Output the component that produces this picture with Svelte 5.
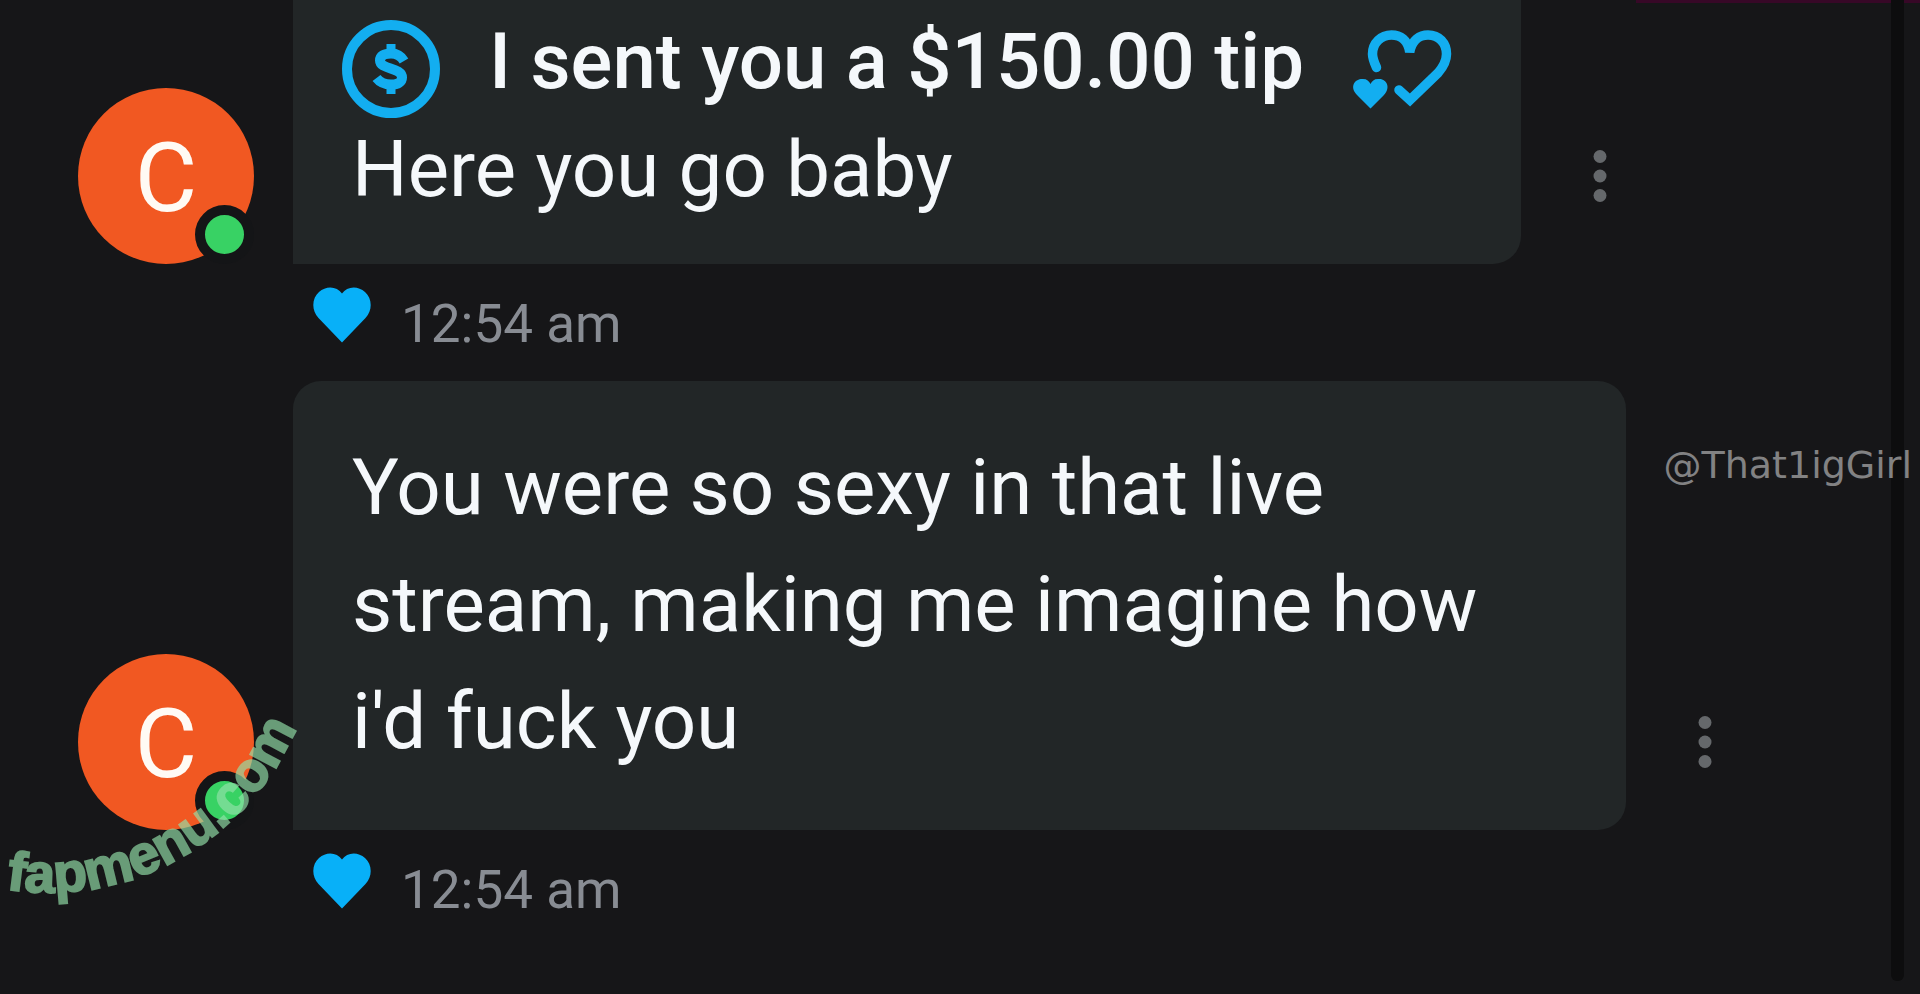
<script lang="ts">
  type Message = {
    id: number;
    initial: string;
    tip?: string;
    text: string;
    time: string;
  };

  const messages: Message[] = [
    { id: 1, initial: 'C', tip: 'I sent you a $150.00 tip', text: 'Here you go baby', time: '12:54 am' },
    {
      id: 2,
      initial: 'C',
      text: "You were so sexy in that live stream, making me imagine how i'd fuck you",
      time: '12:54 am',
    },
  ];
</script>

<main class="chat">
  {#each messages as message (message.id)}
    <article class="message" class:with-tip={message.tip}>
      <div class="row">
        <div class="avatar">
          <span>{message.initial}</span>
          <i class="online"></i>
        </div>

        <div class="bubble">
          {#if message.tip}
            <div class="tip">
              <svg class="tip-icon" viewBox="0 0 98 98" fill="none" aria-hidden="true">
                <circle cx="49" cy="49" r="44" stroke="currentColor" stroke-width="10" />
                <path
                  d="M62 41C59 36 55 33.500 49 33.500C42 33.500 38 36 38 40.500C38 50 60 47 60 57.500C60 62 56 64.500 49 64.500C42 64.500 38 62.500 34.500 58"
                  stroke="currentColor"
                  stroke-width="10"
                />
                <path d="M49 24V34M49 64V74" stroke="currentColor" stroke-width="9" />
              </svg>
              <strong>{message.tip}</strong>
              <svg class="tip-icon" viewBox="0 0 98 98" fill="none" aria-hidden="true">
                <path
                  d="M23.500 47.500C21 42 19.500 38 19.500 34C19.500 23 28 15 38.500 15C47 15 55 20 56.700 32C59 20 67 15 75 15C86 15 93.500 23 93.500 34C93.500 41 91 46 85 53L57 80L46 70"
                  stroke="currentColor"
                  stroke-width="9.5"
                  stroke-linecap="round"
                />
                <path
                  d="M17.500 88.500L4 75C-5 65 4 58 10 59C14 59 16 61 17.500 64C19 61 21 59 25 59C32 58 39 66 31 75Z"
                  fill="currentColor"
                />
              </svg>
            </div>
          {/if}
          <p>{message.text}</p>
        </div>

        <button class="more" type="button" aria-label="More">
          <svg viewBox="0 0 14 52" fill="currentColor" aria-hidden="true">
            <circle cx="7" cy="6.500" r="6.500" />
            <circle cx="7" cy="26" r="6.500" />
            <circle cx="7" cy="45.500" r="6.500" />
          </svg>
        </button>
      </div>

      <div class="meta">
        <button class="like" type="button" aria-label="Like">
          <svg viewBox="0 0 58 56" fill="currentColor" aria-hidden="true">
            <path d="M29 55.500L5.500 31C-2 23 -1 11 6 5C13 -1.500 24 -1 29 6.500C34 -1 45 -1.500 52 5C59 11 60 23 52.500 31Z" />
          </svg>
        </button>
        <time>{message.time}</time>
      </div>
    </article>
  {/each}

  <div class="top-line"></div>
  <div class="scrollbar"></div>
  <span class="handle">@That1igGirl</span>

  <svg class="stamp" viewBox="0 0 320 300" aria-label="fapmenu.com">
    <path id="stamp-arc" d="M6 249A269 269 0 0 0 314 25" fill="none" />
    <text><textPath href="#stamp-arc">fapmenu.com</textPath></text>
  </svg>
</main>

<style>
  :global(body) {
    margin: 0;
    background: #161618;
  }

  .chat {
    position: relative;
    min-height: 100vh;
    box-sizing: border-box;
    padding-left: 78px;
    overflow: hidden;
    font-family: Roboto, 'Liberation Sans', sans-serif;
    color: #f5f8fb;
  }

  .message {
    margin-bottom: 11px;
  }

  .row {
    display: flex;
    align-items: flex-end;
  }

  .avatar {
    position: relative;
    flex: none;
    display: flex;
    align-items: center;
    justify-content: center;
    box-sizing: border-box;
    width: 176px;
    height: 176px;
    margin-right: 39px;
    padding-top: 4px;
    border-radius: 50%;
    background: #f15822;
    font-size: 96px;
    color: #fffaf4;
  }

  .online {
    position: absolute;
    right: 0;
    bottom: 0;
    width: 39px;
    height: 39px;
    border: 10px solid #141517;
    border-radius: 50%;
    background: #38d264;
  }

  .bubble {
    box-sizing: border-box;
    max-width: 1333px;
    padding: 48px 70px 50px 59px;
    border-radius: 28px 28px 28px 0;
    background: #222627;
    font-size: 78px;
    line-height: 117px;
  }

  .with-tip .bubble {
    padding-top: 12px;
    padding-bottom: 36px;
    border-radius: 0 0 28px 0;
  }

  .bubble p {
    margin: 0;
  }

  .tip {
    display: flex;
    align-items: center;
    gap: 49px;
    height: 99px;
    margin-left: -10px;
  }

  .tip strong {
    font-weight: 500;
    white-space: nowrap;
  }

  .tip-icon {
    flex: none;
    width: 98px;
    height: 98px;
    margin-top: 14px;
    color: #13aef0;
    overflow: visible;
  }

  .more,
  .like {
    padding: 0;
    border: 0;
    background: none;
    cursor: pointer;
  }

  .more {
    flex: none;
    display: flex;
    align-items: center;
    justify-content: center;
    width: 58px;
    height: 176px;
    margin-left: 50px;
    color: #65686b;
  }

  .more svg {
    width: 14px;
    height: 52px;
  }

  .meta {
    display: flex;
    align-items: center;
    height: 106px;
    padding-left: 235px;
  }

  .like {
    display: flex;
    margin: 0 30px 0 0;
    padding-bottom: 4px;
    color: #08b0f8;
  }

  .like svg {
    width: 58px;
    height: 56px;
  }

  .meta time {
    padding-top: 14px;
    font-size: 53px;
    line-height: 64px;
    color: #888c93;
  }

  .top-line {
    position: absolute;
    top: 0;
    right: 0;
    width: 284px;
    height: 3px;
    background: #370827;
  }

  .scrollbar {
    position: absolute;
    top: 0;
    right: 16px;
    bottom: 13px;
    width: 13px;
    border-radius: 0 0 6px 6px;
    background: #0d0d0e;
  }

  .handle {
    position: absolute;
    top: 441px;
    right: 8px;
    font-family: 'DejaVu Sans', sans-serif;
    font-size: 38px;
    line-height: 48px;
    color: #828283;
  }

  .stamp {
    position: absolute;
    top: 640px;
    left: 0;
    width: 320px;
    height: 300px;
    overflow: visible;
    pointer-events: none;
    opacity: 0.66;
  }

  .stamp text {
    font-family: 'Liberation Sans', Arial, sans-serif;
    font-size: 55px;
    font-weight: 700;
    fill: #94e2aa;
    stroke: #94e2aa;
    stroke-width: 2px;
  }
</style>
